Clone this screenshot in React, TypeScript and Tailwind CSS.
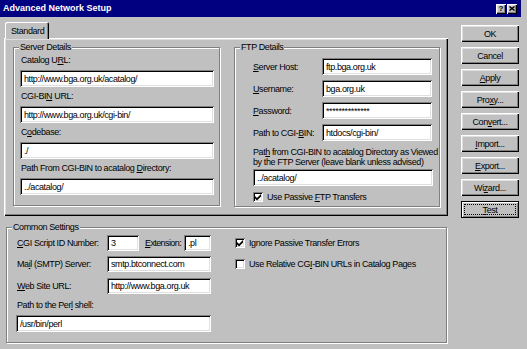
import React from "react";

const F = "font-['Liberation_Sans',Arial,sans-serif]";
const LBL = "text-[9px] leading-[12px] tracking-[-0.4px] text-black whitespace-nowrap";
const SUNKEN =
  "bg-white shadow-[inset_1px_1px_0_#808080,inset_-1px_-1px_0_#ffffff,inset_2px_2px_0_#000000,inset_-2px_-2px_0_#dfdfdf]";
const RAISED =
  "bg-[#c0c0c0] shadow-[inset_1px_1px_0_#ffffff,inset_-1px_-1px_0_#000000,inset_-2px_-2px_0_#808080,inset_2px_2px_0_#dfdfdf]";

function Field({ value, className }: { value: string; className: string }) {
  return (
    <div className={`${SUNKEN} ${className} flex items-center pl-[4px] overflow-hidden shrink-0`}>
      <span className={LBL}>{value}</span>
    </div>
  );
}

function Group({
  title,
  className,
  children,
}: {
  title: string;
  className: string;
  children: React.ReactNode;
}) {
  return (
    <div
      className={`relative border border-[#808080] shadow-[1px_1px_0_#ffffff,inset_1px_1px_0_#ffffff] ${className}`}
    >
      <span className={`absolute top-[-7px] left-[5px] bg-[#c0c0c0] px-[1px] ${LBL}`}>{title}</span>
      {children}
    </div>
  );
}

function Check({ checked }: { checked: boolean }) {
  return (
    <div className={`${SUNKEN} w-[10px] h-[10px] shrink-0 flex items-center justify-center`}>
      {checked && (
        <svg width="7" height="7" viewBox="0 0 7 7">
          <path d="M0 2 L2 4 L6 0 L6 2.5 L2 6.5 L0 4.5 Z" fill="black" />
        </svg>
      )}
    </div>
  );
}

function Btn({ children, focus }: { children: React.ReactNode; focus?: boolean }) {
  if (focus) {
    return (
      <div className="relative w-[58px] h-[17px] border border-black bg-[#c0c0c0] shadow-[inset_1px_1px_0_#ffffff,inset_-1px_-1px_0_#808080] flex items-center justify-center">
        <span className="absolute inset-[2px] border border-dotted border-black" />
        <span className={LBL}>{children}</span>
      </div>
    );
  }
  return (
    <div className={`${RAISED} w-[58px] h-[17px] flex items-center justify-center`}>
      <span className={LBL}>{children}</span>
    </div>
  );
}

export default function App() {
  return (
    <div className={`${F} w-[527px] h-[349px] bg-[#c0c0c0] overflow-hidden`}>
      {/* Title bar */}
      <div className="h-[17px] mr-[6px] bg-[#000080] flex items-center pl-[3px] pr-[4px]">
        <span className="text-white font-bold text-[9px] leading-none whitespace-nowrap">
          Advanced Network Setup
        </span>
        <div className="ml-auto flex gap-[1px]">
          <div className={`${RAISED} w-[10px] h-[10px] flex items-center justify-center`}>
            <span className="text-[8px] font-bold leading-none text-black">?</span>
          </div>
          <div className={`${RAISED} w-[10px] h-[10px] flex items-center justify-center`}>
            <svg width="6" height="5" viewBox="0 0 6 5">
              <path d="M0.5 0.5 L5.5 4.5 M5.5 0.5 L0.5 4.5" stroke="black" strokeWidth="1.4" />
            </svg>
          </div>
        </div>
      </div>

      <div className="flex">
        {/* Left column */}
        <div className="ml-[4px] w-[444px] flex flex-col">
          {/* Tab */}
          <div className="relative z-10 mt-[5px] ml-[1px] w-[44px] h-[17px] -mb-[1px] bg-[#c0c0c0] rounded-t-[2px] shadow-[inset_1px_1px_0_#ffffff,inset_-1px_0_0_#000000,inset_-2px_0_0_#808080] flex items-center pl-[6px]">
            <span className={LBL}>Standard</span>
          </div>
          {/* Panel */}
          <div className="h-[178px] shadow-[inset_1px_1px_0_#ffffff,inset_-1px_-1px_0_#000000,inset_-2px_-2px_0_#808080,inset_2px_2px_0_#dfdfdf] flex pt-[9px] pl-[9px] gap-[14px]">
            <Group title="Server Details" className="w-[207px] h-[159px] flex flex-col pl-[6px] pt-[6px]">
              <span className={`${LBL} ml-[1px]`}>
                Catalog U<u>R</u>L:
              </span>
              <Field value="http://www.bga.org.uk/acatalog/" className="mt-[4px] w-[194px] h-[17px]" />
              <span className={`${LBL} ml-[1px] mt-[3px]`}>
                CGI-BI<u>N</u> URL:
              </span>
              <Field value="http://www.bga.org.uk/cgi-bin/" className="mt-[4px] w-[194px] h-[17px]" />
              <span className={`${LBL} ml-[1px] mt-[3px]`}>
                C<u>o</u>debase:
              </span>
              <Field value="./" className="mt-[4px] w-[194px] h-[17px]" />
              <span className={`${LBL} ml-[1px] mt-[3px]`}>
                Path From CGI-BIN to acatalog <u>D</u>irectory:
              </span>
              <Field value="../acatalog/" className="mt-[4px] w-[194px] h-[17px]" />
            </Group>

            <Group title="FTP Details" className="w-[206px] h-[160px] flex flex-col pl-[18px] pt-[10px]">
              <div className="flex flex-col gap-[5px]">
                <div className="flex items-center h-[17px]">
                  <span className={`${LBL} w-[69px]`}>
                    <u>S</u>erver Host:
                  </span>
                  <Field value="ftp.bga.org.uk" className="w-[110px] h-[17px]" />
                </div>
                <div className="flex items-center h-[17px]">
                  <span className={`${LBL} w-[69px]`}>
                    <u>U</u>sername:
                  </span>
                  <Field value="bga.org.uk" className="w-[110px] h-[17px]" />
                </div>
                <div className="flex items-center h-[17px]">
                  <span className={`${LBL} w-[69px]`}>
                    <u>P</u>assword:
                  </span>
                  <Field value="**************" className="w-[110px] h-[17px]" />
                </div>
                <div className="flex items-center h-[17px]">
                  <span className={`${LBL} w-[69px]`}>
                    Path to CGI-<u>B</u>IN:
                  </span>
                  <Field value="htdocs/cgi-bin/" className="w-[110px] h-[17px]" />
                </div>
              </div>
              <div className="mt-[6px] flex flex-col">
                <span className="text-[9px] leading-[10px] tracking-[-0.4px] text-black whitespace-nowrap">
                  Pat<u>h</u> from CGI-BIN to acatalog Directory as Viewed
                </span>
                <span className="text-[9px] leading-[10px] tracking-[-0.4px] text-black whitespace-nowrap">
                  by the FTP Server (leave blank unless advised)
                </span>
              </div>
              <Field value="../acatalog/" className="mt-[2px] w-[180px] h-[17px]" />
              <div className="mt-[5px] flex items-center gap-[4px]">
                <Check checked />
                <span className={LBL}>
                  Use Passive <u>F</u>TP Transfers
                </span>
              </div>
            </Group>
          </div>

          {/* Common settings */}
          <Group title="Common Settings" className="mt-[11px] ml-[2px] w-[441px] h-[116px] flex pt-[7px] pl-[9px]">
            <div className="w-[195px] flex flex-col">
              <div className="flex items-center h-[16px]">
                <span className={`${LBL} ml-[1px] w-[90px]`}>
                  <u>C</u>GI Script ID Number:
                </span>
                <Field value="3" className="w-[32px] h-[16px]" />
                <span className="text-[9px] leading-[12px] tracking-[-0.6px] text-black whitespace-nowrap ml-[6px] w-[39px]">
                  <u>E</u>xtension:
                </span>
                <Field value=".pl" className="w-[27px] h-[16px]" />
              </div>
              <div className="flex items-center h-[16px] mt-[5px]">
                <span className={`${LBL} ml-[1px] w-[90px]`}>
                  Ma<u>i</u>l (SMTP) Server:
                </span>
                <Field value="smtp.btconnect.com" className="w-[104px] h-[16px]" />
              </div>
              <div className="flex items-center h-[16px] mt-[6px]">
                <span className={`${LBL} ml-[1px] w-[90px]`}>
                  <u>W</u>eb Site URL:
                </span>
                <Field value="http://www.bga.org.uk" className="w-[104px] h-[16px]" />
              </div>
              <span className={`${LBL} ml-[1px] mt-[5px]`}>
                Path to the Per<u>l</u> shell:
              </span>
              <Field value="/usr/bin/perl" className="mt-[4px] w-[195px] h-[17px]" />
            </div>
            <div className="ml-[24px] pt-[3px] flex flex-col">
              <div className="flex items-center gap-[4px] h-[10px]">
                <Check checked />
                <span className={LBL}>Ignore Passive Transfer Errors</span>
              </div>
              <div className="flex items-center gap-[4px] h-[10px] mt-[11px]">
                <Check checked={false} />
                <span className={LBL}>
                  Use Relative CG<u>I</u>-BIN URLs in Catalog Pages
                </span>
              </div>
            </div>
          </Group>
        </div>

        {/* Buttons */}
        <div className="ml-[13px] mt-[8px] flex flex-col gap-[5px]">
          <Btn>OK</Btn>
          <Btn>Cancel</Btn>
          <Btn>
            <u>A</u>pply
          </Btn>
          <Btn>
            Pro<u>x</u>y...
          </Btn>
          <Btn>
            Con<u>v</u>ert...
          </Btn>
          <Btn>
            <u>I</u>mport...
          </Btn>
          <Btn>
            <u>E</u>xport...
          </Btn>
          <Btn>
            Wi<u>z</u>ard...
          </Btn>
          <Btn focus>
            <u>T</u>est
          </Btn>
        </div>
      </div>
    </div>
  );
}
